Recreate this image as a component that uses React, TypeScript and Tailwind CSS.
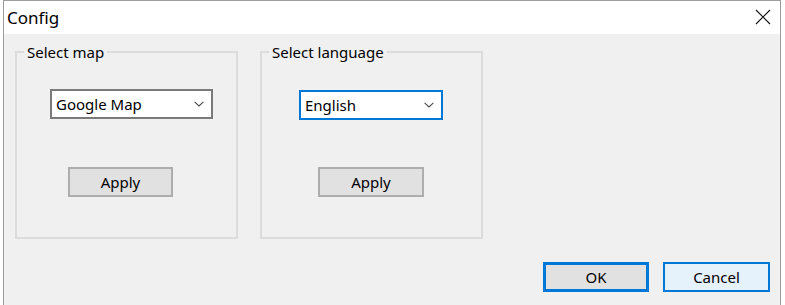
import React from 'react';

const font = { fontFamily: '"Noto Sans", "Open Sans", sans-serif' };

const Chevron: React.FC = () => (
  <svg width="10" height="6" viewBox="0 0 10 6" className="shrink-0">
    <polyline points="0.6,0.8 5,5 9.4,0.8" fill="none" stroke="#4a4a4a" strokeWidth="1.1" />
  </svg>
);

interface ComboProps {
  value: string;
  focused?: boolean;
  className?: string;
}

const Combo: React.FC<ComboProps> = ({ value, focused, className }) => (
  <div
    className={
      'h-[30px] bg-white flex items-center justify-between pl-[4px] pr-[7px] border-2 ' +
      (focused ? 'border-[#0078d7] ' : 'border-[#7a7a7a] ') +
      (className ?? '')
    }
  >
    <span className="text-[15px] text-black leading-none">{value}</span>
    <Chevron />
  </div>
);

const Button: React.FC<{ label: string; className?: string }> = ({ label, className }) => (
  <div
    className={
      'h-[30px] flex items-center justify-center text-[15px] text-black leading-none ' + (className ?? '')
    }
  >
    {label}
  </div>
);

const Group: React.FC<{ title: string; children: React.ReactNode }> = ({ title, children }) => (
  <fieldset className="w-[223px] h-[197px] border-2 border-[#dcdcdc] m-0 p-0">
    <legend className="ml-[7px] px-[3px] text-[15px] leading-[20px] text-black">{title}</legend>
    {children}
  </fieldset>
);

export default function App() {
  return (
    <div className="w-[785px] h-[305px] bg-white overflow-hidden" style={font}>
      <div className="ml-[3px] w-[778px] h-[305px] border-x border-t border-[#9d9d9d] flex flex-col">
        {/* Title bar */}
        <div className="h-[33px] bg-white flex items-center justify-between pl-[3px] pr-[9px]">
          <span className="text-[17px] text-black leading-none -mt-[1px]">Config</span>
          <svg width="16" height="16" viewBox="0 0 16 16" className="-mt-[2px]">
            <path d="M1 1 L15 15 M15 1 L1 15" stroke="#111" strokeWidth="1.1" fill="none" />
          </svg>
        </div>

        {/* Body */}
        <div className="flex-1 bg-[#f0f0f0] flex flex-col">
          <div className="flex gap-[22px] pl-[11px] pt-[8px]">
            <Group title="Select map">
              <Combo value="Google Map" className="w-[163px] ml-[33px] mt-[27px]" />
              <Button
                label="Apply"
                className="w-[105px] ml-[51px] mt-[48px] bg-[#e1e1e1] border-2 border-[#adadad]"
              />
            </Group>
            <Group title="Select language">
              <Combo value="English" focused className="w-[144px] ml-[37px] mt-[28px]" />
              <Button
                label="Apply"
                className="w-[106px] ml-[56px] mt-[47px] bg-[#e1e1e1] border-2 border-[#adadad]"
              />
            </Group>
          </div>

          <div className="flex justify-end gap-[14px] pr-[10px] mt-[23px]">
            <Button label="OK" className="w-[106px] bg-[#e1e1e1] border-[3px] border-[#0078d7]" />
            <Button label="Cancel" className="w-[107px] bg-[#e5f1fb] border-2 border-[#0078d7]" />
          </div>
        </div>
      </div>
    </div>
  );
}
